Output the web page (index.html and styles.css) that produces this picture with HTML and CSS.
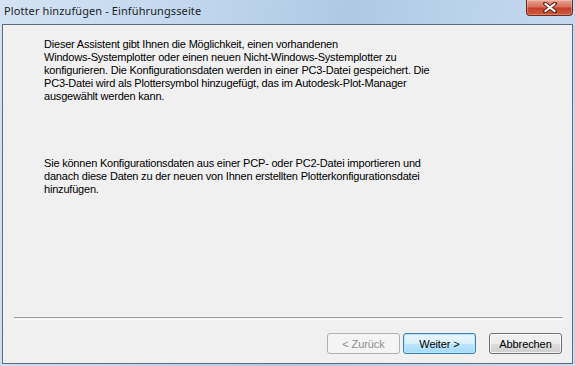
FILE: index.html
```html
<!DOCTYPE html>
<html lang="de">
<head>
<meta charset="utf-8">
<title>Plotter hinzufügen</title>
<link rel="stylesheet" href="styles.css">
</head>
<body>
<div class="window">
  <div class="titlebar">
    <span class="title">Plotter hinzufügen - Einführungsseite</span>
    <div class="close">
      <svg width="14" height="11" viewBox="0 0 14 11">
        <path d="M2 1.5 L12 9.5 M12 1.5 L2 9.5" stroke="#5a2a22" stroke-width="4" stroke-linecap="round"/>
        <path d="M2.5 2 L11.5 9 M11.5 2 L2.5 9" stroke="#ffffff" stroke-width="2.2" stroke-linecap="round"/>
      </svg>
    </div>
  </div>
  <div class="client">
    <div class="content">
      <p class="para">Dieser Assistent gibt Ihnen die Möglichkeit, einen vorhandenen<br>Windows-Systemplotter oder einen neuen Nicht-Windows-Systemplotter zu<br>konfigurieren. Die Konfigurationsdaten werden in einer PC3-Datei gespeichert. Die<br>PC3-Datei wird als Plottersymbol hinzugefügt, das im Autodesk-Plot-Manager<br>ausgewählt werden kann.</p>
      <p class="para para2">Sie können Konfigurationsdaten aus einer PCP- oder PC2-Datei importieren und<br>danach diese Daten zu der neuen von Ihnen erstellten Plotterkonfigurationsdatei<br>hinzufügen.</p>
    </div>
    <div class="separator"></div>
    <div class="buttons">
      <button class="btn disabled">&lt; Zurück</button>
      <button class="btn default">Weiter &gt;</button>
      <button class="btn cancel">Abbrechen</button>
    </div>
  </div>
</div>
</body>
</html>
```
FILE: styles.css
```css
html, body {
  margin: 0;
  padding: 0;
}
body {
  width: 575px;
  height: 366px;
  overflow: hidden;
}
.window {
  width: 575px;
  height: 366px;
  box-sizing: border-box;
  display: flex;
  flex-direction: column;
  background: linear-gradient(100deg, #d3e3f4 0%, #c2d7ee 30%, #aec8e4 55%, #bcd3ec 75%, #c9dcf1 100%);
}
.titlebar {
  height: 24px;
  display: flex;
  align-items: flex-start;
  justify-content: space-between;
  position: relative;
}
.title {
  font-family: "Noto Sans", "Open Sans", sans-serif;
  font-size: 11px;
  color: #1e1e1e;
  margin: 3px 0 0 4px;
  line-height: 16px;
  letter-spacing: 0.1px;
}
.close {
  width: 45px;
  height: 15px;
  margin-right: 2px;
  border: 1px solid #6e2a1f;
  border-top: none;
  border-radius: 0 0 4px 4px;
  background: linear-gradient(#e9a593 0%, #d8705b 45%, #c5402a 55%, #cf5a3c 100%);
  display: flex;
  align-items: center;
  justify-content: center;
  box-shadow: inset 0 0 0 1px rgba(255,255,255,0.25);
}
.client {
  margin: 0 2px 2px 2px;
  height: 340px;
  box-sizing: border-box;
  border: 1px solid #5f6b78;
  background: #f0f0f0;
  display: flex;
  flex-direction: column;
}
.content {
  flex: 1;
  padding: 13px 0 0 41px;
}
.para {
  margin: 0;
  font-family: "Liberation Sans", Arial, sans-serif;
  font-size: 11px;
  line-height: 13px;
  letter-spacing: -0.2px;
  color: #000;
}
.para2 {
  margin-top: 54px;
}
.separator {
  margin: 0 9px 0 11px;
  height: 1px;
  border-top: 1px solid #a0a0a0;
  border-bottom: 1px solid #ffffff;
}
.buttons {
  display: flex;
  justify-content: flex-end;
  padding: 13px 10px 9px 0;
  gap: 3px;
}
.btn {
  width: 73px;
  height: 21px;
  box-sizing: border-box;
  font-family: "Liberation Sans", Arial, sans-serif;
  font-size: 11px;
  letter-spacing: -0.1px;
  color: #000;
  border: 1px solid #707070;
  border-radius: 3px;
  padding: 0;
  background: linear-gradient(#f2f2f2 0%, #ebebeb 50%, #dddddd 51%, #cfcfcf 100%);
  box-shadow: inset 0 0 0 1px rgba(255,255,255,0.7);
}
.btn.disabled {
  color: #8d8d8d;
  border-color: #adb2b5;
  background: #f4f4f4;
  box-shadow: none;
}
.btn.default {
  border-color: #3c7fb1;
  background: linear-gradient(#eaf6fd 0%, #d9f0fc 50%, #bee6fd 51%, #a7d9f5 100%);
  box-shadow: inset 0 0 0 1px #b9e4fa;
}
.btn.cancel {
  margin-left: 10px;
}
```
